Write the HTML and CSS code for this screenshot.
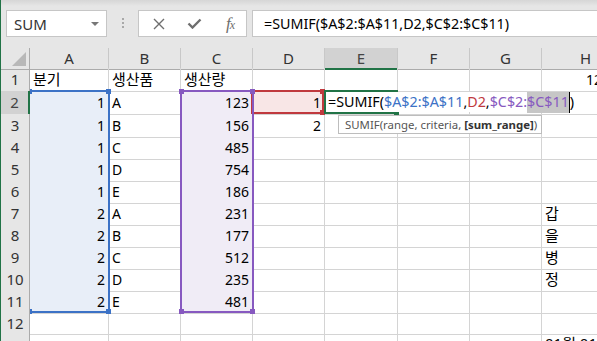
FILE: index.html
```html
<!DOCTYPE html>
<html lang="ko">
<head>
    <meta charset="UTF-8">
    <title>SUMIF</title>
    <link rel="stylesheet" href="styles.css">
</head>
<body>
    <div class="app">
        <!-- 수식 입력줄 -->
        <div class="toolbar">
            <div class="name-box">SUM<span class="caret"></span></div>
            <div class="grip"></div>
            <div class="fx-box">
                <svg width="12" height="12" viewBox="0 0 12 12"><path d="M1 1L11 11M11 1L1 11" stroke="#6e6e6e" stroke-width="1.4" fill="none"/></svg>
                <svg width="15" height="11" viewBox="0 0 15 11"><path d="M1.5 5.5L5.5 9.5L13.5 1.5" stroke="#6e6e6e" stroke-width="2.4" fill="none"/></svg>
                <i class="fx">f<span>x</span></i>
            </div>
            <div class="formula-input">=SUMIF($A$2:$A$11,D2,$C$2:$C$11)</div>
        </div>

        <!-- 시트 -->
        <div class="sheet">
            <div class="row hdr">
                <div class="rh corner"><span class="tri"></span></div>
                <div class="ch">A</div><div class="ch">B</div><div class="ch">C</div><div class="ch">D</div>
                <div class="ch on">E</div><div class="ch">F</div><div class="ch">G</div><div class="ch">H</div>
            </div>
            <div class="row tall">
                <div class="rh">1</div>
                <div class="c ko">분기</div><div class="c ko">생산품</div><div class="c ko">생산량</div><div class="c"></div>
                <div class="c"></div><div class="c"></div><div class="c"></div><div class="c num">12345</div>
            </div>
            <div class="row tall">
                <div class="rh on">2</div>
                <div class="c num fa">1</div><div class="c">A</div><div class="c num fc">123</div><div class="c num fd">1</div>
                <div class="c"></div><div class="c"></div><div class="c"></div><div class="c"></div>
            </div>
            <div class="row">
                <div class="rh">3</div>
                <div class="c num fa">1</div><div class="c">B</div><div class="c num fc">156</div><div class="c num">2</div>
                <div class="c"></div><div class="c"></div><div class="c"></div><div class="c"></div>
            </div>
            <div class="row">
                <div class="rh">4</div>
                <div class="c num fa">1</div><div class="c">C</div><div class="c num fc">485</div><div class="c"></div>
                <div class="c"></div><div class="c"></div><div class="c"></div><div class="c"></div>
            </div>
            <div class="row">
                <div class="rh">5</div>
                <div class="c num fa">1</div><div class="c">D</div><div class="c num fc">754</div><div class="c"></div>
                <div class="c"></div><div class="c"></div><div class="c"></div><div class="c"></div>
            </div>
            <div class="row">
                <div class="rh">6</div>
                <div class="c num fa">1</div><div class="c">E</div><div class="c num fc">186</div><div class="c"></div>
                <div class="c"></div><div class="c"></div><div class="c"></div><div class="c"></div>
            </div>
            <div class="row">
                <div class="rh">7</div>
                <div class="c num fa">2</div><div class="c">A</div><div class="c num fc">231</div><div class="c"></div>
                <div class="c"></div><div class="c"></div><div class="c"></div><div class="c ko">갑</div>
            </div>
            <div class="row">
                <div class="rh">8</div>
                <div class="c num fa">2</div><div class="c">B</div><div class="c num fc">177</div><div class="c"></div>
                <div class="c"></div><div class="c"></div><div class="c"></div><div class="c ko">을</div>
            </div>
            <div class="row">
                <div class="rh">9</div>
                <div class="c num fa">2</div><div class="c">C</div><div class="c num fc">512</div><div class="c"></div>
                <div class="c"></div><div class="c"></div><div class="c"></div><div class="c ko">병</div>
            </div>
            <div class="row">
                <div class="rh">10</div>
                <div class="c num fa">2</div><div class="c">D</div><div class="c num fc">235</div><div class="c"></div>
                <div class="c"></div><div class="c"></div><div class="c"></div><div class="c ko">정</div>
            </div>
            <div class="row">
                <div class="rh">11</div>
                <div class="c num fa">2</div><div class="c">E</div><div class="c num fc">481</div><div class="c"></div>
                <div class="c"></div><div class="c"></div><div class="c"></div><div class="c"></div>
            </div>
            <div class="row">
                <div class="rh">12</div>
                <div class="c"></div><div class="c"></div><div class="c"></div><div class="c"></div>
                <div class="c"></div><div class="c"></div><div class="c"></div><div class="c"></div>
            </div>
            <div class="row last">
                <div class="rh">13</div>
                <div class="c"></div><div class="c"></div><div class="c"></div><div class="c"></div>
                <div class="c"></div><div class="c"></div><div class="c"></div><div class="c ko">01월 01일</div>
            </div>

            <!-- 참조 범위 표시 -->
            <div class="range rg-d"><i class="hd tr"></i><i class="hd br"></i></div>
            <div class="range rg-a"><i class="hd tl half"></i><i class="hd tr"></i><i class="hd bl half"></i><i class="hd br"></i></div>
            <div class="range rg-c"><i class="hd tl"></i><i class="hd tr"></i><i class="hd bl"></i><i class="hd br"></i></div>
            <div class="active-cell"><i class="fill-handle"></i></div>
            <div class="editor">=SUMIF(<span class="ref-a">$A$2:$A$11</span>,<span class="ref-d">D2</span>,<span class="ref-c">$C$2:</span><span class="ref-c hl">$C$11</span><span class="cursor">)</span></div>
            <div class="tip">SUMIF(range, criteria, <b>[sum_range]</b>)</div>
        </div>
    </div>
</body>
</html>
```

FILE: styles.css
```css
* { box-sizing: border-box; }
body {
    margin: 0;
    font-family: "Noto Sans", "Noto Sans CJK KR", sans-serif;
    font-size: 14px;
    color: #000;
    overflow: hidden;
}
.app {
    width: 597px;
    height: 341px;
    border-left: 1px solid #217346;
    overflow: hidden;
    background: #fff;
}

/* toolbar */
.toolbar {
    height: 48px;
    background: linear-gradient(#d6d6d6, #e6e6e6 6px);
    display: flex;
    align-items: flex-start;
    padding: 10px 0 0 5px;
}
.name-box {
    width: 101px;
    height: 27px;
    background: #fff;
    border: 1px solid #c6c6c6;
    display: flex;
    align-items: center;
    justify-content: space-between;
    padding: 0 7px 0 7px;
    font-size: 15px;
    color: #333;
}
.caret {
    border-left: 4px solid transparent;
    border-right: 4px solid transparent;
    border-top: 4px solid #777;
}
.grip {
    width: 2px;
    height: 10px;
    margin: 8px 14px 0 15px;
    background: repeating-linear-gradient(#a8a8a8 0 2px, transparent 2px 4px);
}
.fx-box {
    width: 109px;
    height: 27px;
    background: #fff;
    border: 1px solid #c6c6c6;
    display: flex;
    align-items: center;
    padding: 0 0 0 14px;
    gap: 22px;
}
.fx {
    font-family: "Liberation Serif", serif;
    font-size: 17px;
    color: #6e6e6e;
    letter-spacing: -1px;
    margin-left: 2px;
}
.fx span { font-size: 12px; }
.formula-input {
    flex: 1;
    height: 27px;
    margin-left: 5px;
    background: #fff;
    border: 1px solid #c6c6c6;
    border-right: none;
    padding: 2px 0 0 11px;
    font-size: 14.3px;
    line-height: 22px;
    white-space: nowrap;
}

/* sheet */
.sheet { position: relative; }
.row {
    display: grid;
    grid-template-columns: 29px 79px 72px 72px 72px 73px 72px 72px 88px;
    height: 22px;
}
.row.tall { height: 23px; }
.row.hdr { height: 20px; }
.c {
    border-right: 1px solid #d4d4d4;
    border-bottom: 1px solid #d4d4d4;
    padding: 0 3px;
    line-height: 23px;
    white-space: nowrap;
}
.row.last .c { line-height: 18px; }
.ko { font-size: 15px; }
.num { text-align: right; }
.fa { background: #e8eef8; }
.fc { background: #f0ecf6; }
.fd { background: #f8e6e6; }
.rh, .ch {
    background: #e6e6e6;
    color: #333;
    text-align: center;
    font-size: 15px;
}
.rh {
    border-right: 1px solid #ababab;
    border-bottom: 1px solid #cfcfcf;
    line-height: 22px;
}
.rh.on { background: #d2d2d2; border-right: 2px solid #217346; color: #444; }
.ch {
    border-right: 1px solid #c8c8c8;
    border-bottom: 1px solid #ababab;
    line-height: 20px;
}
.ch.on { background: #d2d2d2; border-bottom: 2px solid #217346; color: #444; }
.corner { position: relative; border-bottom: 1px solid #ababab; }
.tri {
    position: absolute;
    right: 3px;
    bottom: 3px;
    border-left: 14px solid transparent;
    border-bottom: 14px solid #b8b8b8;
}

/* range outlines */
.range { position: absolute; }
.rg-a { left: 29px; top: 42px; width: 80px; height: 223px; border: 2px solid #3c72c6; border-left: none; }
.rg-c { left: 179px; top: 42px; width: 74px; height: 223px; border: 2px solid #8759c0; }
.rg-d { left: 250px; top: 42px; width: 73px; height: 24px; border: 2px solid #c0393e; }
.hd {
    position: absolute;
    width: 5px;
    height: 5px;
}
.rg-a .hd { background: #3c72c6; }
.rg-c .hd { background: #8759c0; }
.rg-d .hd { background: #c0393e; }
.hd.tl { left: -3px; top: -3px; }
.hd.tr { right: -3px; top: -3px; }
.hd.bl { left: -3px; bottom: -3px; }
.hd.br { right: -3px; bottom: -3px; }
.hd.half { left: 0; width: 2px; }

.active-cell {
    position: absolute;
    left: 323px;
    top: 42px;
    width: 74px;
    height: 24px;
    border: 2px solid #217346;
    border-right: none;
}
.fill-handle {
    position: absolute;
    right: -1px;
    bottom: -4px;
    width: 5px;
    height: 5px;
    background: #217346;
}
.editor {
    position: absolute;
    left: 325px;
    top: 44px;
    width: 254px;
    height: 20px;
    background: #fff;
    padding-left: 2px;
    font-size: 14.3px;
    line-height: 20px;
    white-space: nowrap;
}
.ref-a { color: #3c72c6; }
.ref-d { color: #c0393e; }
.ref-c { color: #8759c0; }
.hl { background: #c6c6c6; display: inline-block; height: 21px; }
.cursor { border-left: 1px solid #000; display: inline-block; height: 21px; }
.tip {
    position: absolute;
    left: 337px;
    top: 67px;
    width: 204px;
    height: 19px;
    background: #fff;
    border: 1px solid #bdbdbd;
    padding-left: 6px;
    font-size: 11.4px;
    line-height: 17px;
    color: #555;
    white-space: nowrap;
}
.tip b { color: #333; }
```
